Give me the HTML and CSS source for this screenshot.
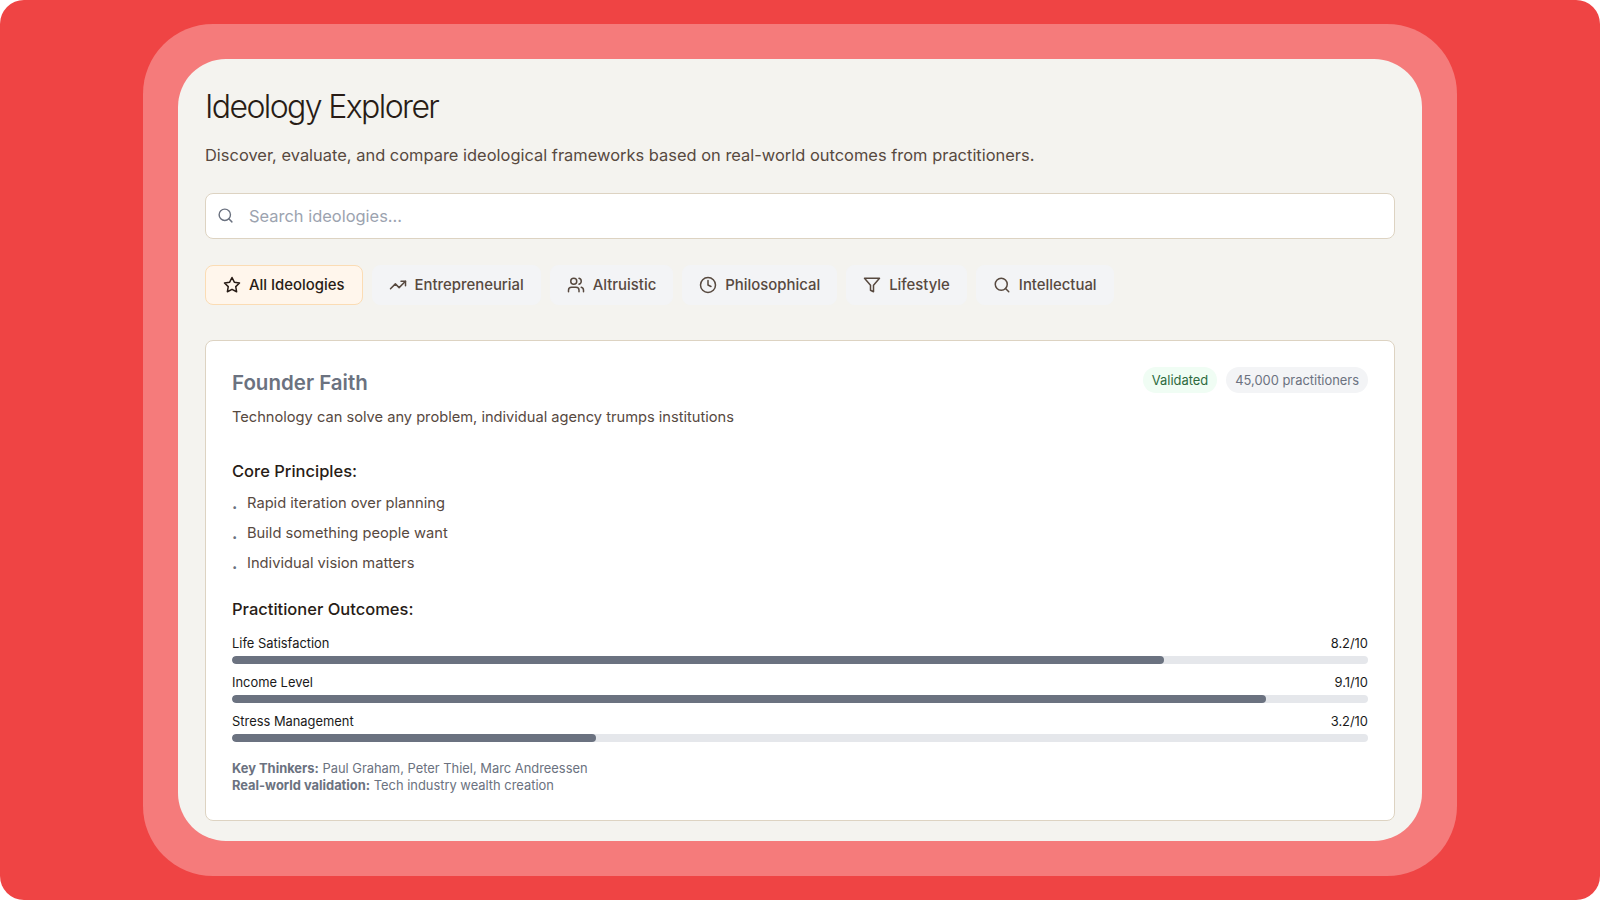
FILE: index.html
```html
<!DOCTYPE html>
<html lang="en">
<head>
    <meta charset="UTF-8">
    <meta name="viewport" content="width=device-width, initial-scale=1.0">
    <title>Ideology Explorer</title>
    <link rel="stylesheet" href="styles.css">
</head>
<body>
    <div class="screen">
        <div class="frame">
            <main class="panel">
                <h1>Ideology Explorer</h1>
                <p class="intro">Discover, evaluate, and compare ideological frameworks based on real-world outcomes from practitioners.</p>

                <div class="search">
                    <svg class="icon" viewBox="0 0 24 24"><circle cx="11" cy="11" r="8"/><path d="m21 21-4.3-4.3"/></svg>
                    <span class="placeholder">Search ideologies...</span>
                </div>

                <div class="tabs">
                    <div class="tab active">
                        <svg class="icon" viewBox="0 0 24 24"><path d="M12 2l3.09 6.26L22 9.27l-5 4.87 1.18 6.88L12 17.77l-6.18 3.25L7 14.14 2 9.27l6.91-1.01L12 2z"/></svg>
                        All Ideologies
                    </div>
                    <div class="tab">
                        <svg class="icon" viewBox="0 0 24 24"><path d="M22 7l-8.5 8.5-5-5L2 17"/><path d="M16 7h6v6"/></svg>
                        Entrepreneurial
                    </div>
                    <div class="tab">
                        <svg class="icon" viewBox="0 0 24 24"><path d="M16 21v-2a4 4 0 0 0-4-4H6a4 4 0 0 0-4 4v2"/><circle cx="9" cy="7" r="4"/><path d="M22 21v-2a4 4 0 0 0-3-3.87"/><path d="M16 3.13a4 4 0 0 1 0 7.75"/></svg>
                        Altruistic
                    </div>
                    <div class="tab">
                        <svg class="icon" viewBox="0 0 24 24"><circle cx="12" cy="12" r="10"/><path d="M12 6v6l4 2"/></svg>
                        Philosophical
                    </div>
                    <div class="tab">
                        <svg class="icon" viewBox="0 0 24 24"><path d="M22 3H2l8 9.46V19l4 2v-8.54L22 3z"/></svg>
                        Lifestyle
                    </div>
                    <div class="tab">
                        <svg class="icon" viewBox="0 0 24 24"><circle cx="11" cy="11" r="8"/><path d="m21 21-4.3-4.3"/></svg>
                        Intellectual
                    </div>
                </div>

                <section class="card">
                    <div class="card-head">
                        <h2>Founder Faith</h2>
                        <div class="badges">
                            <span class="badge green">Validated</span>
                            <span class="badge gray">45,000 practitioners</span>
                        </div>
                    </div>
                    <p class="tagline">Technology can solve any problem, individual agency trumps institutions</p>

                    <h3 class="principles-title">Core Principles:</h3>
                    <ul class="principles">
                        <li>Rapid iteration over planning</li>
                        <li>Build something people want</li>
                        <li>Individual vision matters</li>
                    </ul>

                    <h3 class="outcomes-title">Practitioner Outcomes:</h3>
                    <div class="outcome">
                        <div class="outcome-row"><span>Life Satisfaction</span><span>8.2/10</span></div>
                        <div class="track"><div class="fill" style="width: 82%"></div></div>
                    </div>
                    <div class="outcome">
                        <div class="outcome-row"><span>Income Level</span><span>9.1/10</span></div>
                        <div class="track"><div class="fill" style="width: 91%"></div></div>
                    </div>
                    <div class="outcome">
                        <div class="outcome-row"><span>Stress Management</span><span>3.2/10</span></div>
                        <div class="track"><div class="fill" style="width: 32%"></div></div>
                    </div>

                    <div class="notes">
                        <div><strong>Key Thinkers:</strong> Paul Graham, Peter Thiel, Marc Andreessen</div>
                        <div><strong>Real-world validation:</strong> Tech industry wealth creation</div>
                    </div>
                </section>
            </main>
        </div>
    </div>
</body>
</html>
```

FILE: styles.css
```css
* {
    box-sizing: border-box;
}
body {
    margin: 0;
    background: #ffffff;
    font-family: Inter, "Liberation Sans", sans-serif;
}
.screen {
    width: 1600px;
    height: 900px;
    background: #ef4444;
    border-radius: 24px;
    display: flex;
    justify-content: center;
    align-items: center;
}
.frame {
    width: 1314px;
    height: 852px;
    padding: 35px;
    background: #f57b7b;
    border-radius: 70px;
}
.panel {
    height: 100%;
    padding: 28px 27px 0;
    background: #f4f3ef;
    border-radius: 48px;
    overflow: hidden;
}
.icon {
    width: 18px;
    height: 18px;
    flex: none;
    fill: none;
    stroke: currentColor;
    stroke-width: 2;
    stroke-linecap: round;
    stroke-linejoin: round;
}
h1 {
    margin: 0;
    font-size: 32px;
    line-height: 40px;
    font-weight: 300;
    letter-spacing: -1.6px;
    color: #281c16;
}
.intro {
    margin: 16px 0 0;
    font-size: 16.45px;
    line-height: 24px;
    color: #57493f;
}
.search {
    margin-top: 26px;
    height: 46px;
    padding: 0 11px;
    display: flex;
    align-items: center;
    gap: 15px;
    background: #ffffff;
    border: 1px solid #ddd3c2;
    border-radius: 8px;
    color: #6b7280;
}
.search .icon {
    width: 17px;
    height: 17px;
    margin-bottom: 2px;
}
.placeholder {
    font-size: 16.45px;
    color: #9ca3af;
}
.tabs {
    margin-top: 26px;
    display: flex;
    gap: 9px;
}
.tab {
    height: 40px;
    padding: 0 16px;
    display: flex;
    align-items: center;
    gap: 8px;
    background: #f3f4f6;
    border: 1px solid #f3f4f6;
    border-radius: 8px;
    font-size: 14.9px;
    font-weight: 500;
    color: #57493f;
}
.tab.active {
    padding: 0 17px;
    background: #fff6ec;
    border-color: #fbdcb4;
    color: #281c16;
}
.card {
    margin-top: 35px;
    height: 481px;
    padding: 26px;
    background: #ffffff;
    border: 1px solid #ddd3c2;
    border-radius: 8px;
}
.card-head {
    display: flex;
    justify-content: space-between;
    align-items: flex-start;
}
h2 {
    margin: 0;
    font-size: 20.5px;
    line-height: 32px;
    font-weight: 600;
    color: #6b7280;
}
.badges {
    display: flex;
    gap: 9px;
}
.badge {
    height: 26px;
    padding: 0 9px;
    display: flex;
    align-items: center;
    border-radius: 13px;
    font-size: 12.9px;
}
.badge.green {
    background: #f0fdf4;
    color: #2d6a3e;
}
.badge.gray {
    background: #f3f4f6;
    color: #6b7280;
}
.tagline {
    margin: 6.5px 0 0;
    font-size: 14.65px;
    line-height: 22px;
    color: #57493f;
}
h3 {
    margin: 0;
    font-size: 16.5px;
    line-height: 24px;
    font-weight: 500;
    color: #281c16;
}
.principles-title {
    margin-top: 31px;
}
.principles {
    margin: 5px 0 0;
    padding: 0;
    list-style: none;
}
.principles li {
    height: 30px;
    display: flex;
    align-items: center;
    font-size: 14.7px;
    color: #57493f;
}
.principles li::before {
    content: ".";
    width: 15px;
    font-size: 16px;
    font-weight: 700;
    color: #6b7280;
}
.outcomes-title {
    margin-top: 19px;
    margin-bottom: 13px;
}
.outcome {
    margin-bottom: 9.3px;
}
.outcome-row {
    display: flex;
    justify-content: space-between;
    font-size: 12.9px;
    line-height: 20px;
    color: #1a1a1a;
}
.track {
    height: 8px;
    margin-top: 2px;
    background: #e5e7eb;
    border-radius: 4px;
    overflow: hidden;
}
.fill {
    height: 100%;
    background: #6b7280;
    border-radius: 4px;
}
.notes {
    margin-top: 18px;
    font-size: 12.9px;
    line-height: 17px;
    color: #6b7280;
}
```
